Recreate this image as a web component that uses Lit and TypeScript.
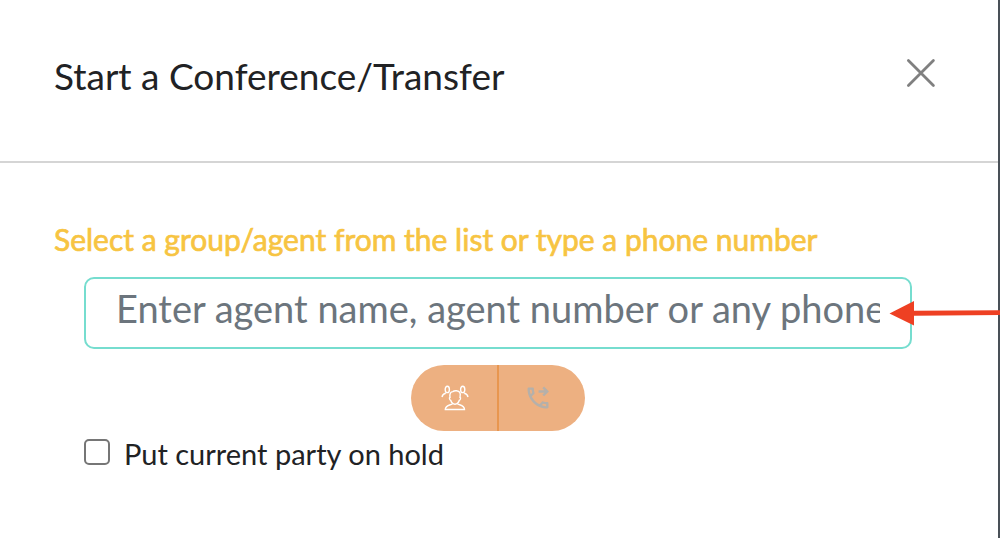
import { LitElement, html, css } from "lit";
import { customElement } from "lit/decorators.js";

@customElement("app-root")
export class AppRoot extends LitElement {
  static styles = css`
    :host {
      display: block;
      font-family: Lato, "Open Sans", sans-serif;
      color: #212224;
    }
    * { box-sizing: border-box; }
    .dialog {
      position: relative;
      min-height: 100vh;
      background: #fff;
      border-right: 2px solid #495057;
    }
    .header {
      display: flex;
      justify-content: space-between;
      align-items: flex-start;
      padding: 54px 62px 63px 54px;
      border-bottom: 2px solid #d5d5d5;
    }
    h1 {
      margin: 0;
      font-size: 37px;
      line-height: 44px;
      font-weight: 400;
    }
    button {
      margin: 0;
      padding: 0;
      border: 0;
      background: none;
      font: inherit;
      cursor: pointer;
    }
    .close { display: flex; padding-top: 4px; }
    svg { display: block; }
    .body { padding: 58px 86px 0 84px; }
    .label {
      display: block;
      margin-left: -30px;
      font-size: 30px;
      line-height: 36px;
      font-weight: 400;
      color: #f7c442;
      -webkit-text-stroke: 0.7px #f7c442;
      white-space: nowrap;
    }
    .field {
      display: block;
      width: 100%;
      height: 72px;
      margin-top: 20px;
      padding: 0 30px 10px;
      border: 2px solid #76ddcf;
      border-radius: 10px;
      background: #fff;
      font: 400 38px/58px Lato, "Open Sans", sans-serif;
      color: #212224;
      outline: none;
    }
    .field::placeholder { color: #6c757d; opacity: 1; }
    .actions {
      display: grid;
      grid-template-columns: 86px 88px;
      width: 174px;
      height: 66px;
      margin: 16px auto 0;
      border-radius: 33px;
      overflow: hidden;
      background: #edb081;
    }
    .action {
      display: flex;
      align-items: center;
      justify-content: center;
      padding-left: 2px;
    }
    .action + .action {
      padding: 0 8px 0 0;
      border-left: 2px solid #e8964f;
    }
    .hold {
      display: flex;
      align-items: center;
      gap: 14px;
      margin-top: 6px;
      font-size: 29px;
      line-height: 34px;
    }
    .check {
      appearance: none;
      width: 26px;
      height: 26px;
      margin: 0 0 4px;
      border: 2px solid #767676;
      border-radius: 5px;
      background: #fff;
    }
    .check:checked { background: #76ddcf; }
    .pointer {
      position: absolute;
      top: 300px;
      right: -2px;
    }
  `;

  render() {
    return html`
      <section class="dialog" role="dialog" aria-labelledby="title">
        <header class="header">
          <h1 id="title">Start a Conference/Transfer</h1>
          <button class="close" type="button" aria-label="Close">
            <svg width="30" height="30" viewBox="0 0 30 30" fill="none" stroke="#808080" stroke-width="2.8" stroke-linecap="round">
              <path d="M2.4 2.4 27.4 27.4M27.4 2.4 2.4 27.4" />
            </svg>
          </button>
        </header>
        <div class="body">
          <label class="label" for="party">Select a group/agent from the list or type a phone number</label>
          <input class="field" id="party" type="text" placeholder="Enter agent name, agent number or any phone" />
          <div class="actions">
            <button class="action" type="button" aria-label="Conference">
              <svg width="28" height="26" viewBox="0 0 28 26" fill="none" stroke="#fff" stroke-width="1.4">
                <ellipse cx="6.3" cy="4.4" rx="2.1" ry="3.2" />
                <ellipse cx="21.7" cy="4.4" rx="2.1" ry="3.2" />
                <path d="M1 12C1.4 9.8 2.6 8.7 4.8 8.3M27 12C26.6 9.8 25.4 8.7 23.2 8.3" />
                <path d="M9 12.4C8.4 8.7 9.6 6.8 12 6.6 13.4 5.2 17.8 5.5 18.7 7.4 19.8 9 19.2 11 19 12.4 20.2 12.8 19.3 15 18.3 15.3 17.6 17.5 16.3 19.2 14 19.2S10.4 17.5 9.7 15.3C8.7 15 7.8 12.8 9 12.4Z" />
                <path d="M11.6 18.6C10.5 20.2 4.3 19.5 4.3 24.5H23.5C23.5 19.5 17.5 20.2 16.4 18.6" />
              </svg>
            </button>
            <button class="action" type="button" aria-label="Transfer">
              <svg width="28" height="28" viewBox="0 0 24 24" fill="#b5b0aa">
                <path d="M17.2 2.2 21.4 6.4 17.2 10.6 15.7 9.2 17.4 7.5H12.5V5.3H17.4L15.7 3.6Z" />
                <path d="M20 15.5c-1.25 0-2.45-.2-3.57-.57-.35-.11-.74-.03-1.02.24l-2.2 2.2c-2.83-1.44-5.15-3.75-6.59-6.59l2.2-2.21c.28-.26.36-.65.25-1C8.7 6.45 8.5 5.25 8.5 4c0-.55-.45-1-1-1H4c-.55 0-1 .45-1 1 0 9.39 7.61 17 17 17 .55 0 1-.45 1-1v-3.5c0-.55-.45-1-1-1zM5.03 5h1.5c.07.88.22 1.75.46 2.59L5.79 8.8c-.41-1.21-.67-2.48-.76-3.8zM19 18.97c-1.32-.09-2.6-.35-3.8-.76l1.2-1.2c.85.24 1.71.39 2.6.45z" />
              </svg>
            </button>
          </div>
          <label class="hold"><input class="check" type="checkbox" />Put current party on hold</label>
        </div>
        <svg class="pointer" width="112" height="28" viewBox="0 0 112 28" aria-hidden="true">
          <path d="M1.5 13.5 26 1V10.8L112 10.2V15L26 15.8V25.5Z" fill="#ee4023" />
        </svg>
      </section>
    `;
  }
}
